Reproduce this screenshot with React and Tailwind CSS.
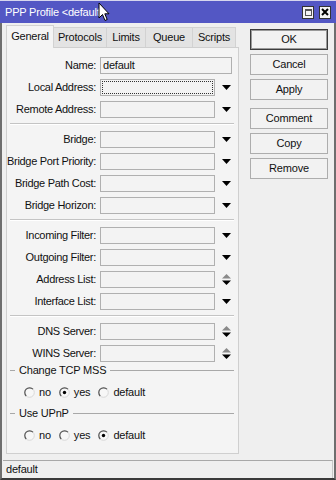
import React from "react";

const FONT = { fontFamily: '"Liberation Sans", Arial, sans-serif' };

function DownArrow() {
  return (
    <svg width="9" height="5" viewBox="0 0 9 5" className="block">
      <polygon points="0,0 9,0 4.5,5" fill="#000" />
    </svg>
  );
}

function SpinArrow() {
  return (
    <svg width="9" height="11" viewBox="0 0 9 11" className="block">
      <polygon points="4.5,0 9,4.5 0,4.5" fill="#8a8a8a" />
      <polygon points="0,6.5 9,6.5 4.5,11" fill="#000" />
    </svg>
  );
}

function Field({ label, value, arrow = "down", wide = false, focused = false }) {
  return (
    <div className="flex h-[22px] items-center">
      <div className="w-[89px] shrink-0 whitespace-nowrap text-right text-[11px] leading-none tracking-[-0.3px] text-[#111]">
        {label}:
      </div>
      <div
        className={`ml-[4px] h-[17px] shrink-0 border border-[#b0b0b0] bg-[#f3f3f3] p-[1px] ${wide ? "w-[132px]" : "w-[115px]"}`}
      >
        <div
          className={`flex h-full items-center px-[1px] text-[11px] leading-none tracking-[-0.2px] text-[#111] ${focused ? "border border-dotted border-[#333]" : ""}`}
        >
          {value}
        </div>
      </div>
      {!wide && (
        <div className="ml-[7px] flex w-[9px] justify-center">{arrow === "spin" ? <SpinArrow /> : <DownArrow />}</div>
      )}
    </div>
  );
}

function Separator() {
  return (
    <div className="flex h-[8px] items-center px-[3px]">
      <div className="h-[2px] w-[224px] border-t border-b border-t-[#c4c4c4] border-b-white" />
    </div>
  );
}

function Radio({ checked }) {
  return (
    <svg width="11" height="11" viewBox="0 0 11 11" className="block">
      <circle cx="5.5" cy="5.5" r="4.8" fill="#f7f7f7" stroke="#d8d8d8" strokeWidth="1" />
      <path d="M9 2.2 A4.8 4.8 0 1 0 2.2 9" fill="none" stroke="#555" strokeWidth="1.2" />
      {checked && <circle cx="5.5" cy="5.5" r="1.7" fill="#000" />}
    </svg>
  );
}

function RadioGroup({ title, options, selected }) {
  return (
    <div>
      <div className="flex h-[12px] items-center">
        <div className="ml-[3px] h-px w-[5px] bg-[#a8a8a8]" />
        <span className="whitespace-nowrap px-[4px] text-[11px] leading-none tracking-[-0.2px] text-[#111]">{title}</span>
        <div className="mr-[4px] h-px flex-1 bg-[#a8a8a8]" />
      </div>
      <div className="mt-[5px] flex h-[22px] items-center pl-[17px]">
        {options.map((o) => (
          <label
            key={o}
            className="mr-[8px] flex items-center gap-[4px] text-[11px] leading-none tracking-[-0.2px] text-[#111]"
          >
            <Radio checked={o === selected} />
            <span>{o}</span>
          </label>
        ))}
      </div>
    </div>
  );
}

function Btn({ children, primary }) {
  return (
    <div
      className={`flex h-[21px] w-[78px] items-center justify-center bg-[#f2f2f2] text-[11px] leading-none tracking-[-0.2px] text-[#111] ${
        primary ? "border border-[#3c3c3c] shadow-[inset_0_0_0_1px_#9a9a9a]" : "border border-[#adadad]"
      }`}
    >
      {children}
    </div>
  );
}

const tabs = ["General", "Protocols", "Limits", "Queue", "Scripts"];
const tabW = [48, 53, 39, 47, 43];

export default function App() {
  return (
    <div style={FONT} className="relative flex h-[480px] w-[336px] flex-col overflow-hidden bg-[#efefef]">
      {/* title bar */}
      <div className="flex h-[23px] shrink-0 items-center border-t border-[#d6d6ee] bg-[#5357c4] pl-[5px] pr-[5px]">
        <span className="whitespace-nowrap text-[11px] leading-none tracking-[-0.2px] text-white">PPP Profile &lt;default&gt;</span>
        <div className="ml-auto flex gap-[5px]">
          <div className="flex h-[13px] w-[12px] items-center justify-center border border-[#333] bg-[#f4f4f4]">
            <div className="h-[7px] w-[7px] border border-[#555] border-t-2" />
          </div>
          <div className="flex h-[13px] w-[12px] items-center justify-center border border-[#333] bg-[#f4f4f4]">
            <svg width="8" height="8" viewBox="0 0 8 8">
              <path d="M1 1 L7 7 M7 1 L1 7" stroke="#000" strokeWidth="2" />
            </svg>
          </div>
        </div>
      </div>

      {/* body */}
      <div className="flex flex-1 border-x-2 border-[#6e6e6e]">
        <div className="ml-[4px] flex w-[233px] flex-col pt-[1px]">
          {/* tabs */}
          <div className="flex h-[23px] items-end">
            {tabs.map((t, i) =>
              i === 0 ? (
                <div
                  key={t}
                  style={{ width: tabW[i] }}
                  className="relative z-10 -mb-px flex h-[23px] items-center justify-center border border-b-0 border-[#d2d2d2] bg-[#f4f4f4] pb-[2px] text-[11px] leading-none tracking-[-0.2px] text-[#111]"
                >
                  {t}
                </div>
              ) : (
                <div
                  key={t}
                  style={{ width: tabW[i] }}
                  className="flex h-[20px] items-center justify-center border border-l-0 border-b-0 border-[#d2d2d2] bg-[#e3e3e3] text-[11px] leading-none tracking-[-0.2px] text-[#111]"
                >
                  {t}
                </div>
              )
            )}
          </div>
          {/* panel */}
          <div className="h-[407px] border border-[#cfcfcf] bg-[#f4f4f4] pt-[6px]">
            <Field label="Name" value="default" wide />
            <Field label="Local Address" focused />
            <Field label="Remote Address" />
            <Separator />
            <Field label="Bridge" />
            <Field label="Bridge Port Priority" />
            <Field label="Bridge Path Cost" />
            <Field label="Bridge Horizon" />
            <Separator />
            <Field label="Incoming Filter" />
            <Field label="Outgoing Filter" />
            <Field label="Address List" arrow="spin" />
            <Field label="Interface List" />
            <Separator />
            <Field label="DNS Server" arrow="spin" />
            <Field label="WINS Server" arrow="spin" />
            <RadioGroup title="Change TCP MSS" options={["no", "yes", "default"]} selected="yes" />
            <div className="h-[4px]" />
            <RadioGroup title="Use UPnP" options={["no", "yes", "default"]} selected="default" />
          </div>
        </div>

        {/* buttons */}
        <div className="ml-[11px] flex flex-col pt-[6px]">
          <div className="flex flex-col gap-[4px]">
            <Btn primary>OK</Btn>
            <Btn>Cancel</Btn>
            <Btn>Apply</Btn>
          </div>
          <div className="mt-[8px] flex flex-col gap-[4px]">
            <Btn>Comment</Btn>
            <Btn>Copy</Btn>
            <Btn>Remove</Btn>
          </div>
        </div>
      </div>

      {/* status bar */}
      <div className="flex h-[22px] shrink-0 flex-col border-x-2 border-b-2 border-[#3a3a3a] border-x-[#6e6e6e]">
        <div className="mx-[1px] mt-[2px] flex h-[18px] items-center border-t border-r border-t-[#a8a8a8] border-r-[#c8c8c8] pl-[3px] text-[11px] leading-none tracking-[-0.2px] text-[#111]">
          default
        </div>
      </div>

      {/* mouse cursor */}
      <svg className="absolute left-[98px] top-[2px]" width="12" height="20" viewBox="0 0 12 20">
        <path d="M1 1 L1 16 L4.5 12.5 L7 18.5 L9.2 17.5 L6.8 11.8 L11 11.8 Z" fill="#fff" stroke="#000" strokeWidth="1" strokeLinejoin="round" />
      </svg>
    </div>
  );
}
